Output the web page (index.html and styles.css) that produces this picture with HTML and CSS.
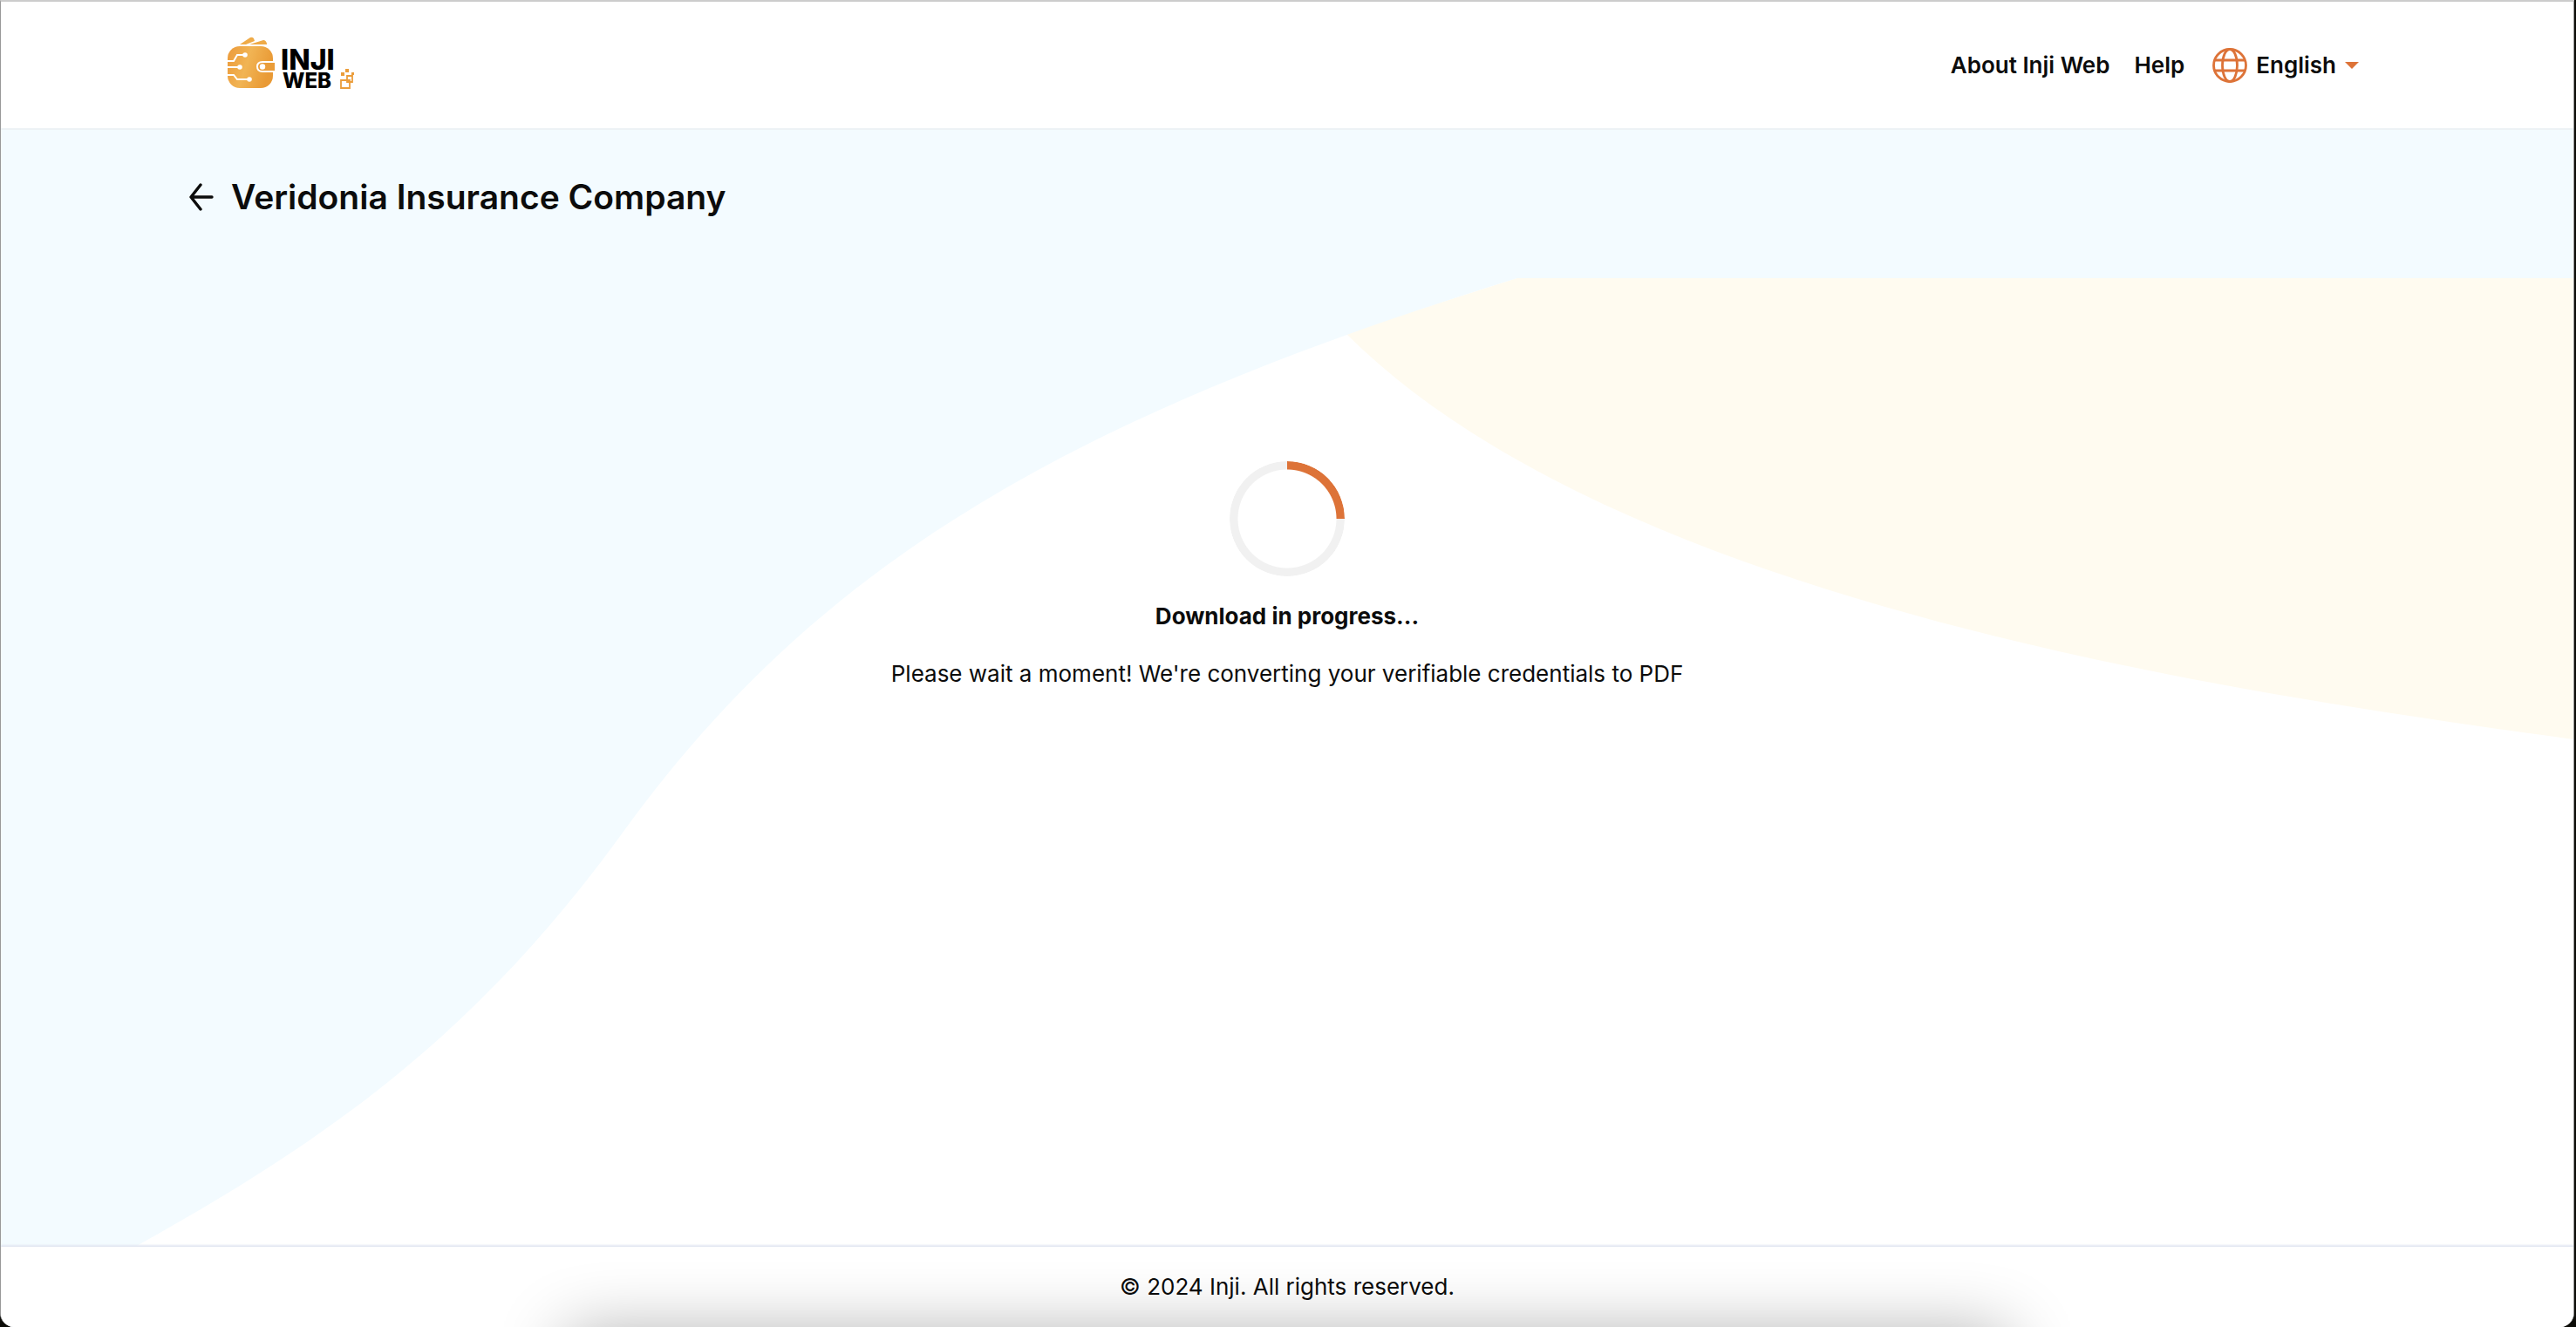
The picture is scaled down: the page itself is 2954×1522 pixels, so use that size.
FILE: index.html
```html
<!DOCTYPE html>
<html lang="en">
<head>
<meta charset="utf-8">
<meta name="viewport" content="width=device-width, initial-scale=1">
<title>Inji Web</title>
<link rel="stylesheet" href="styles.css">
</head>
<body>
<div class="page">
  <header class="header">
    <a class="logo" href="#" aria-label="Inji Web">
      <svg class="logo-image" viewBox="0 0 160 66" aria-hidden="true">
        <defs>
          <linearGradient id="wallet" x1="0" y1="0" x2="1" y2="0.3">
            <stop offset="0" stop-color="#ec9a3a"/>
            <stop offset="0.5" stop-color="#f1b454"/>
            <stop offset="1" stop-color="#e99a35"/>
          </linearGradient>
        </defs>
        <path d="M16 9 28 1q2-1 4 1l1 3-10 4zM27 9l16-5q3 0 4 4v1z" fill="#efab48"/>
        <rect x="2" y="11" width="52" height="48" rx="14" fill="url(#wallet)"/>
        <path d="M57 28H42q-7 0-7 6.500t7 6.500h15z" fill="#fff"/>
        <path d="M56 30H42q-5 0-5 4.500t5 4.500h14z" fill="#ea9d3a"/>
        <circle cx="42" cy="34.500" r="3.200" fill="#fff"/>
        <path d="M0 28h9l4-7h9M0 35h15M0 44h9l4 5h13" fill="none" stroke="#fff" stroke-width="2"/>
        <g fill="#fff"><circle cx="22" cy="21" r="2.800"/><circle cx="16" cy="35" r="2.800"/><circle cx="27" cy="49" r="2.800"/></g>
        <text class="logo-name"><tspan x="63" y="38">INJI</tspan> <tspan class="logo-product" x="65" y="59">WEB</tspan></text>
        <path d="M132 50h10v9h-10zM139 45h6v7h-6z" fill="#fff" stroke="#eb9d3b" stroke-width="1.800"/>
        <path d="M132 41h4v4h-4zM137 37h4v4h-4zM144 41h3v3h-3z" fill="#eb9d3b"/>
      </svg>
    </a>
    <nav class="nav">
      <a class="nav-link" href="#">About Inji Web</a>
      <a class="nav-link" href="#">Help</a>
      <button class="language" type="button">
        <svg class="globe" viewBox="0 0 40 40" aria-hidden="true"><g fill="none" stroke="#dd7338" stroke-width="2.800"><circle cx="20" cy="20" r="18.500"/><ellipse cx="20" cy="20" rx="8.500" ry="18.500"/><path d="M3 14h34M3 26h34"/></g></svg>
        <span>English</span>
        <svg class="caret" viewBox="0 0 16 8" aria-hidden="true"><path d="M0 0h16L8 8z" fill="#dd7338"/></svg>
      </button>
    </nav>
  </header>
  <main class="main">
    <div class="title-bar">
      <button class="back" type="button" aria-label="Back">
        <svg class="back-icon" viewBox="0 0 28 34" aria-hidden="true"><path d="M26 17H2M13 3 2 17l11 14" fill="none" stroke="#0c0c0c" stroke-width="3.400" stroke-linecap="round" stroke-linejoin="round"/></svg>
      </button>
      <h1 class="title">Veridonia Insurance Company</h1>
    </div>
    <section class="content">
      <svg class="waves" viewBox="0 0 2954 1111" preserveAspectRatio="none" aria-hidden="true">
        <path fill="#fffbf0" d="M1741 0H2954V529C2610 481 1864 383 1544 63Z"/>
        <path fill="#f3fbff" d="M0 0H1741C1229 159 939 325 714 636C548 865 378 987 154 1111H0Z"/>
      </svg>
      <div class="status" role="status">
        <div class="spinner"></div>
        <p class="status-title">Download in progress...</p>
        <p class="status-text">Please wait a moment! We're converting your verifiable credentials to PDF</p>
      </div>
    </section>
  </main>
  <footer class="footer">© 2024 Inji. All rights reserved.</footer>
</div>
</body>
</html>
```
FILE: styles.css
```css
* { box-sizing: border-box; }
body {
  margin: 0;
  background: #0c0c08;
  color: #0c0c0c;
  font-family: Inter, "Liberation Sans", sans-serif;
  font-size: 26px;
  line-height: 32px;
}
h1, p { margin: 0; }
a { color: inherit; text-decoration: none; }
button { padding: 0; border: 0; background: none; color: inherit; font: inherit; cursor: pointer; }
svg { display: block; }
.page {
  position: relative;
  display: flex;
  flex-direction: column;
  min-height: 100vh;
  margin-right: 2px;
  overflow: hidden;
  background: #fff;
  border: 1px solid #999;
  border-top: 2px solid #ccc;
  border-bottom: 0;
  border-radius: 0 0 16px 16px;
}
.header {
  display: flex;
  align-items: center;
  justify-content: space-between;
  height: 147px;
  padding: 0 246px 0 258px;
  border-bottom: 2px solid #edf2f5;
}
.logo-image { width: 160px; height: 66px; }
.logo-name { font-size: 32px; font-weight: 800; }
.logo-product { font-size: 24px; }
.nav { display: flex; align-items: center; gap: 28px; font-weight: 600; }
.language { display: flex; align-items: center; gap: 10px; margin-left: 4px; }
.globe { width: 40px; height: 40px; }
.caret { width: 16px; height: 8px; }
.main { display: flex; flex: 1; flex-direction: column; }
.title-bar {
  display: flex;
  align-items: flex-start;
  gap: 20px;
  height: 170px;
  padding: 51px 216px 0;
  background: #f3fbff;
}
.back { padding: 9px 0; }
.back-icon { width: 28px; height: 34px; }
.title { font-size: 39px; font-weight: 600; line-height: 52px; }
.content { position: relative; flex: 1; }
.waves { position: absolute; inset: 0; width: 100%; height: 100%; }
.status {
  position: relative;
  display: flex;
  flex-direction: column;
  align-items: center;
  padding-top: 210px;
  text-align: center;
}
.spinner {
  width: 132px;
  height: 132px;
  border-radius: 50%;
  background: conic-gradient(#dd7338 25%, #f1f1f1 0);
  mask: radial-gradient(closest-side, transparent 56px, #000 57px);
}
.status-title { margin-top: 30px; font-weight: 700; }
.status-text { margin-top: 34px; }
.footer {
  position: relative;
  padding: 30px 0;
  background: #fff;
  box-shadow: 0 -1px 2px 1px #e2e6f2;
  text-align: center;
}
.footer::after {
  content: "";
  position: absolute;
  top: 100%;
  left: 22%;
  right: 22%;
  height: 200px;
  box-shadow: 0 8px 80px #0005;
}
```
